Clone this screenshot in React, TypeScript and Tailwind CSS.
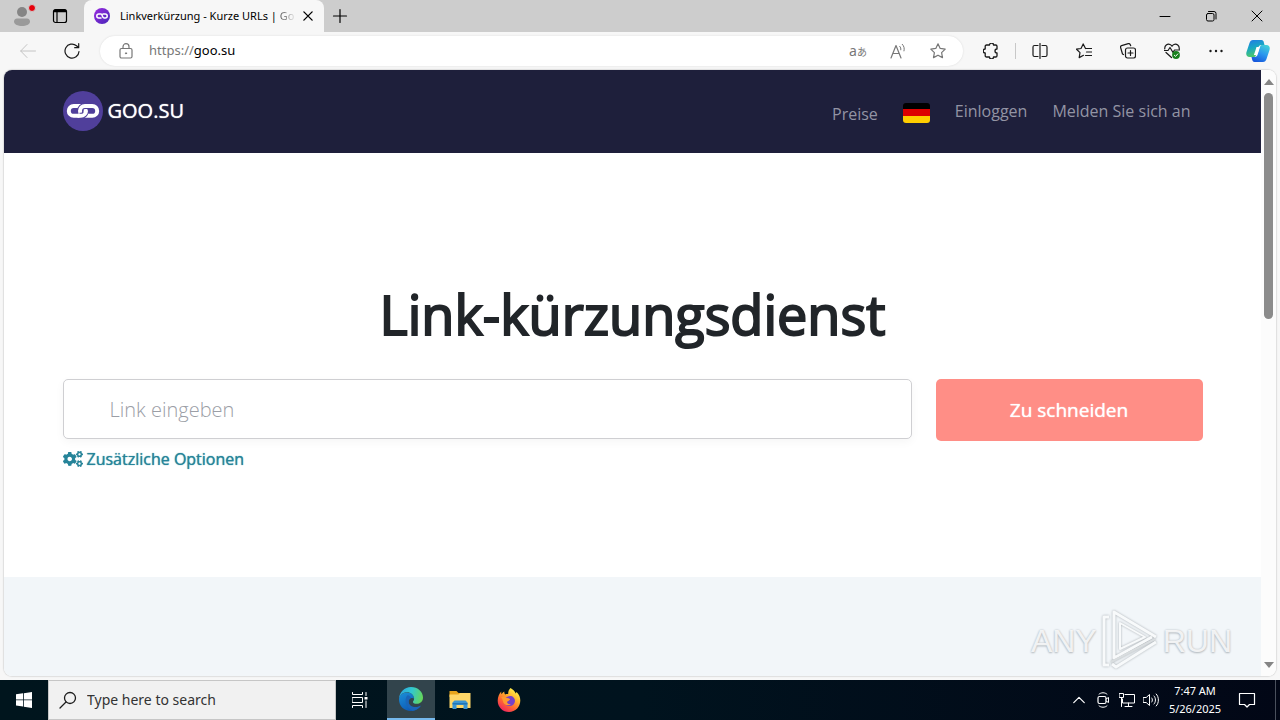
import type { ReactNode } from "react";
import { FaCogs } from "react-icons/fa";

type IconProps = { children: ReactNode; className?: string; box?: string };

function Icon({ children, className = "size-4", box = "0 0 16 16" }: IconProps) {
  return (
    <svg
      viewBox={box}
      className={`shrink-0 ${className}`}
      fill="none"
      stroke="currentColor"
      strokeWidth="1"
      strokeLinecap="round"
      strokeLinejoin="round"
      aria-hidden="true"
    >
      {children}
    </svg>
  );
}

function ChainLogo({ className, tone }: { className: string; tone: string }) {
  return (
    <svg viewBox="0 0 40 40" className={`shrink-0 ${className}`} fill="none" aria-hidden="true">
      <circle cx="20" cy="20" r="20" fill={tone} />
      <rect x="5.800" y="15" width="17" height="9.800" rx="4.900" stroke="#fff" strokeWidth="4" />
      <path d="M24 24.800h5.300a4.900 4.900 0 0 0 0-9.800h-7.400c-2.700 0-4.900 2.200-4.900 4.900 0 1 .3 2 .9 2.800" stroke={tone} strokeWidth="6" />
      <path d="M21.900 24.800h7.400a4.900 4.900 0 0 0 0-9.800h-7.400c-2.700 0-4.900 2.200-4.900 4.900s2.200 4.900 4.900 4.900Z" stroke="#fff" strokeWidth="4" />
      <path d="M16.500 24.800h1.400a4.900 4.900 0 0 0 4.500-3" stroke={tone} strokeWidth="6" />
      <path d="M14.500 24.800h3.400a4.900 4.900 0 0 0 4.900-4.900v-.5" stroke="#fff" strokeWidth="4" />
    </svg>
  );
}

function EdgeLogo() {
  return (
    <svg viewBox="0 0 24 24" className="size-6" aria-hidden="true">
      <defs>
        <linearGradient id="edgeTop" x1="0" y1="0.3" x2="1" y2="0.5">
          <stop offset="0" stopColor="#2aa5e0" />
          <stop offset="0.5" stopColor="#32c8d0" />
          <stop offset="1" stopColor="#65d65a" />
        </linearGradient>
        <linearGradient id="edgeLow" x1="0" y1="0" x2="0.6" y2="1">
          <stop offset="0" stopColor="#1b8fd8" />
          <stop offset="1" stopColor="#0c58b4" />
        </linearGradient>
      </defs>
      <path fill="url(#edgeLow)" d="M0 12.500C0 8 4 5.500 8 5.500c4.500 0 7 3 7 6-2-1.500-6 0-5.500 4 .6 4 6 6.500 12.300 3.200C19.500 22 16 24 12 24 5 24 0 19 0 12.500Z" />
      <path fill="#1a65b8" d="M8.500 8.200C5 12 6 20 13.500 23.800 18 23.400 20.500 21 22 18.600c-6 3.200-11.500.8-12.300-3.200-.4-2.600 1.300-4 2.300-4.600C11.500 9.500 10.300 8.400 8.500 8.200Z" />
      <path fill="url(#edgeTop)" d="M0 12C.3 5 5.500 0 12 0c7 0 12 5 12 10.500 0 4-3 6.300-6.300 6.300-2.600 0-3.700-1-3.700-1.900 0-.7 1.100-1.200 1.100-3.300C15 8 11.700 5.300 8 5.300 4 5.300.6 8 0 12Z" />
    </svg>
  );
}

function FolderLogo() {
  return (
    <svg viewBox="0 0 24 24" className="size-6" aria-hidden="true">
      <path fill="#e8a51c" d="M1.500 3h7l2 2H22v4H1.500Z" />
      <path fill="#ffd768" d="M1.500 6.500h9L12 5h10.500v15h-21Z" />
      <path fill="#3c96d3" d="M4.500 21v-6.500l2-2h11l2 2V21h-4v-4h-7v4Z" />
      <path fill="#2376b4" d="M4.500 15h15v1.500h-15Z" />
    </svg>
  );
}

function FirefoxLogo() {
  return (
    <svg viewBox="0 0 24 24" className="size-6" aria-hidden="true">
      <defs>
        <linearGradient id="fire" x1="0.8" y1="0.1" x2="0.25" y2="0.95">
          <stop offset="0" stopColor="#fff04a" />
          <stop offset="0.35" stopColor="#ffb02c" />
          <stop offset="0.65" stopColor="#ff6a30" />
          <stop offset="1" stopColor="#f0285c" />
        </linearGradient>
      </defs>
      <path fill="url(#fire)" d="M13.500 0c2.600 1.500 4.600 3.600 5.200 5.500l.9-1.600c2.600 2.600 3.700 5.500 3.700 8.600C23.300 19 18.300 24 12 24S.7 19 .7 12.700c0-3.500 1.500-7.200 3.600-9.100-.2 1 0 1.900.4 2.600.7-1.300 1.700-2 2.600-2.600-.1 1 .2 2.200.9 2.800 1-.5 2-.6 3-.3C11 4 11.800 1.500 13.500 0Z" />
      <path fill="#7541c8" d="M8 9.500c2-.2 3.200-1.500 5-1.500 2.800 0 5 2.100 5 5a5.300 5.300 0 0 1-5.500 5c-3.300 0-5.700-2.700-5.300-5.400 1 .9 2.700.8 3.800.4l2-1.300c-.4-1.200-2.900-1.600-5-2.200Z" />
      <path fill="#ff9a2f" d="M4.200 9.200c2-1.200 3.800-.6 5.200.5 1.300 1 3.400.8 3.700 1.500-.3 1-2 1.100-2.700 2.300-1 1.600 1 3.300 3.700 2.500-2.400 2.500-7.600 1-8.200-3.100-.2-1.400-.8-2.500-1.700-3.700Z" />
    </svg>
  );
}

function CopilotLogo() {
  return (
    <svg viewBox="0 0 24 24" className="size-6" aria-hidden="true">
      <defs>
        <linearGradient id="copA" x1="0" y1="0" x2="0.3" y2="1">
          <stop offset="0" stopColor="#2477e8" />
          <stop offset="0.5" stopColor="#18a7c4" />
          <stop offset="1" stopColor="#4cc86a" />
        </linearGradient>
        <linearGradient id="copB" x1="0.8" y1="0" x2="0.3" y2="1">
          <stop offset="0" stopColor="#42d0d8" />
          <stop offset="0.5" stopColor="#2a97ee" />
          <stop offset="1" stopColor="#1657dc" />
        </linearGradient>
      </defs>
      <path fill="url(#copA)" d="M7 1h8.500c1.500 0 2 1 2.300 2.200L18.500 6h-3c-2 0-2.700 1-3.200 2.700L10 16c-.5 1.500-1 2-2.500 2H3.500C.7 18-.3 15.600.5 13L3.500 4C4.200 2 5.200 1 7 1Z" />
      <path fill="url(#copB)" d="M17 23H8.500c-1.500 0-2-1-2.300-2.200L5.500 18h3c2 0 2.700-1 3.200-2.700L14 8c.5-1.500 1-2 2.500-2h4c2.800 0 3.800 2.400 3 5l-3 9c-.7 2-1.700 3-3.500 3Z" />
      <path fill="#fff" d="M10.500 8h3.200l-2 6.500c-.5 1.400-1 1.500-1.700 1.500H7.900l2-6Z" />
    </svg>
  );
}

const iconButton = "flex h-8 w-8 shrink-0 items-center justify-center";

function TabStrip() {
  return (
    <header className="flex h-8 shrink-0 items-stretch bg-[#cdcdcd] text-black">
      <button aria-label="Profile" className="relative ml-2 flex w-7 items-center justify-center">
        <svg viewBox="0 0 20 20" className="size-5" aria-hidden="true">
          <circle cx="10" cy="6" r="5" fill="#858585" />
          <path d="M2 15.500c0-2 1.500-3 3-3h10c1.500 0 3 1 3 3 0 3-4 4.500-8 4.500s-8-1.500-8-4.500Z" fill="#9a9a9a" />
        </svg>
        <span className="absolute top-1 right-0 size-2 rounded-full border border-[#cdcdcd] bg-red-600" />
      </button>
      <button aria-label="Tab actions" className="ml-2 flex w-8 items-center justify-center">
        <Icon className="size-4">
          <rect x="1.500" y="1.500" width="13" height="13" rx="2" strokeWidth="1.200" />
          <path d="M2 3h12" strokeWidth="2.500" strokeLinecap="butt" />
          <path d="M5 3v11" strokeWidth="1.200" />
        </Icon>
      </button>
      <div className="ml-2 flex w-60 items-center rounded-t-lg bg-[#f7f7f7] pr-1.5 pl-1.5">
        <svg viewBox="0 0 16 16" className="ml-1 size-4 shrink-0" fill="none" aria-hidden="true">
          <defs>
            <linearGradient id="fav" x1="0" y1="0" x2="1" y2="1">
              <stop offset="0" stopColor="#9a2be0" />
              <stop offset="1" stopColor="#4726b8" />
            </linearGradient>
          </defs>
          <circle cx="8" cy="8" r="8" fill="url(#fav)" />
          <path d="M7 10H4.800a2 2 0 0 1 0-4H7c1.500 0 1 4 3 4h1.200a2 2 0 0 0 0-4H9" stroke="#fff" strokeWidth="1.500" strokeLinecap="round" />
        </svg>
        <span className="ml-2.5 flex-1 whitespace-nowrap font-['Noto_Sans',sans-serif] text-[11px]">
          Linkverkürzung - Kurze URLs | <span className="bg-linear-to-r from-[#555] to-[#ddd] bg-clip-text text-transparent">Go</span>
        </span>
        <button aria-label="Close tab" className="flex size-5 shrink-0 items-center justify-center">
          <Icon className="size-3">
            <path d="M2.500 2.500l11 11M13.500 2.500l-11 11" strokeWidth="1.800" />
          </Icon>
        </button>
      </div>
      <button aria-label="New tab" className="flex w-8 items-center justify-center">
        <Icon>
          <path d="M8 1.500v13M1.500 8h13" strokeWidth="1.200" />
        </Icon>
      </button>
      <div className="ml-auto flex">
        <button aria-label="Minimize" className="flex w-[46px] items-center justify-center">
          <Icon className="size-3" box="0 0 12 12">
            <path d="M1 6.500h10" />
          </Icon>
        </button>
        <button aria-label="Restore" className="flex w-[46px] items-center justify-center">
          <Icon className="size-3" box="0 0 12 12">
            <rect x="1.500" y="3.500" width="7.500" height="7.500" rx="1.500" />
            <path d="M3.500 1.500H9a2 2 0 0 1 2 2V9" />
          </Icon>
        </button>
        <button aria-label="Close" className="flex w-[46px] items-center justify-center">
          <Icon className="size-3" box="0 0 12 12">
            <path d="M1 1l10 10M11 1L1 11" />
          </Icon>
        </button>
      </div>
    </header>
  );
}

function Toolbar() {
  return (
    <div className="flex h-[38px] shrink-0 items-center bg-[#f7f7f7] pr-2.5 pl-3 text-[#1a1a1a]">
      <button aria-label="Back" className={`${iconButton} text-[#c4c4c4]`}>
        <Icon className="size-4">
          <path d="M15.500 8H.7M7 1.500L.7 8 7 14.500" />
        </Icon>
      </button>
      <button aria-label="Refresh" className={`${iconButton} ml-3`}>
        <Icon className="size-4">
          <path d="M15 8.500A7 7 0 1 1 12.500 2.700L14.500 4.500M14.700.7v4h-4" strokeWidth="1.200" />
        </Icon>
      </button>
      <div className="ml-3 flex h-[30px] flex-1 items-center rounded-full bg-white pr-[9px] pl-[18px] text-[#777] shadow-[0_0_2px_#d8d8d8]">
        <Icon className="size-4">
          <rect x="2" y="5.500" width="12" height="9.500" rx="1.500" strokeWidth="1.200" />
          <path d="M5 5.500V3.700a3 3 0 0 1 6 0v1.800" strokeWidth="1.200" />
          <circle cx="8" cy="10.300" r="0.600" fill="currentColor" />
        </Icon>
        <label htmlFor="address" className="ml-[15px] shrink-0 font-['Noto_Sans',sans-serif] text-[13px] text-[#777]">
          https://
        </label>
        <input id="address" defaultValue="goo.su" className="w-20 min-w-0 flex-1 bg-transparent font-['Noto_Sans',sans-serif] text-[13px] text-black outline-none" />
        <div className="flex items-center gap-2">
          <button aria-label="Translate" className="w-8 text-center font-['Noto_Sans','Noto_Sans_CJK_JP',sans-serif] text-sm leading-4 whitespace-nowrap">
            a<span className="text-[10px]">あ</span>
          </button>
          <button aria-label="Read aloud" className={iconButton}>
            <Icon className="size-4">
              <path d="M1 15L6 2.500 11 15M2.800 10.500h6.400" strokeWidth="1.200" />
              <path d="M9.700 3.300c1 1 1.300 2.200 1.100 3.500M12.300 1.300c1.800 1.800 2.300 4.200 1.700 6.600" />
            </Icon>
          </button>
          <button aria-label="Add to favourites" className={iconButton}>
            <Icon className="size-4">
              <path d="M8 .8l2.200 4.600 5 .7-3.600 3.500.9 5L8 12.200l-4.500 2.400.9-5L.8 6.100l5-.7Z" strokeWidth="1.200" />
            </Icon>
          </button>
        </div>
      </div>
      <div className="ml-3 flex shrink-0 items-center">
        <button aria-label="Extensions" className={iconButton}>
          <Icon className="size-4">
            <path d="M3.500 2h3a2 2 0 0 1 4 0h2.200c.8 0 1.300.5 1.300 1.300V6a2 2 0 1 0 0 4v2.700c0 .8-.5 1.300-1.300 1.300h-2.200a2 2 0 0 1-4 0h-3c-.8 0-1.300-.5-1.300-1.300V10a2 2 0 0 1 0-4V3.300C2.200 2.500 2.700 2 3.500 2Z" strokeWidth="1.300" />
          </Icon>
        </button>
        <span className="mx-2 h-4 w-px bg-[#c8c8c8]" />
        <div className="flex items-center gap-3">
          <button aria-label="Split screen" className={iconButton}>
            <Icon className="size-4">
              <path d="M6 2.500H2.500c-1 0-1.500.5-1.500 1.500v8c0 1 .5 1.500 1.500 1.500H6M10 2.500h3.500c1 0 1.500.5 1.500 1.500v8c0 1-.5 1.500-1.500 1.500H10M8 .5v15" strokeWidth="1.200" />
            </Icon>
          </button>
          <button aria-label="Favourites" className={iconButton}>
            <Icon className="size-4">
              <path d="M9.500 5.500L7.200.9 5 5.500l-4.500.7L4 9.600l-.8 5 4.300-2.300M9.500 5.500h6M10.500 9h5M9.500 12.500h6" strokeWidth="1.200" />
            </Icon>
          </button>
          <button aria-label="Collections" className={iconButton}>
            <Icon className="size-4">
              <rect x="5.500" y="5" width="10" height="10" rx="2" strokeWidth="1.200" />
              <path d="M10.500 7.500v5M8 10h5M3.500 11.500l-1-.5L.6 4.500c-.3-1 .2-1.600 1-1.900L8.300.7c1-.3 1.700.2 2 1l.4 1" strokeWidth="1.200" />
            </Icon>
          </button>
          <button aria-label="Browser essentials" className={iconButton}>
            <Icon className="size-4">
              <path d="M.8 6C.3 2.500 3.500.5 6 1.500c1 .4 1.500 1 2 1.800.5-.8 1-1.400 2-1.800 2.500-1 5.700 1 5.200 4.500M2 9.500l5.500 5M.5 7.500H4L6 4.500l3 5 1.500-2.500h5" strokeWidth="1.200" />
              <circle cx="12" cy="12" r="3.900" fill="#18801d" stroke="none" />
              <path d="M10.300 12.200l1.200 1.200 2.300-2.500" stroke="#fff" />
            </Icon>
          </button>
          <button aria-label="Settings and more" className={iconButton}>
            <Icon className="size-4">
              <g fill="currentColor" stroke="none">
                <circle cx="2.500" cy="8" r="1.200" />
                <circle cx="8" cy="8" r="1.200" />
                <circle cx="13.500" cy="8" r="1.200" />
              </g>
            </Icon>
          </button>
        </div>
        <button aria-label="Copilot" className="ml-3.5 flex items-center">
          <CopilotLogo />
        </button>
      </div>
    </div>
  );
}

function SiteHeader() {
  return (
    <header className="flex h-[83px] shrink-0 justify-center bg-[#1e1f3b] pb-0.5">
      <div className="flex w-[1140px] max-w-full items-center justify-between">
        <a href="#home" className="flex items-center gap-[5px] text-xl leading-8 text-white [text-shadow:0_0_1px_currentColor]">
          <ChainLogo className="size-10" tone="#503f9b" />
          <span>GOO.SU</span>
        </a>
        <nav className="flex items-center gap-[25px] pr-3 text-base text-[#9394a4]">
          <a href="#preise" className="pt-1.5">Preise</a>
          <button aria-label="Deutsch" className="mt-1 flex h-5 w-[27px] flex-col overflow-hidden rounded-[3px]">
            <span className="w-full flex-1 bg-black" />
            <span className="w-full flex-1 bg-[#dd0000]" />
            <span className="w-full flex-1 bg-[#ffce00]" />
          </button>
          <a href="#login">Einloggen</a>
          <a href="#signup">Melden Sie sich an</a>
        </nav>
      </div>
    </header>
  );
}

function Watermark() {
  return (
    <div className="absolute right-11 bottom-1 flex items-center gap-1 font-['Liberation_Sans_Narrow','Liberation_Sans',sans-serif] text-[32px] leading-none text-white/80 [text-shadow:0_0_2px_#b5bbc0,0_1px_2px_#b5bbc0]">
      <span>ANY</span>
      <svg viewBox="0 0 58 62" className="h-[62px] w-[58px] drop-shadow-[0_0_1px_#a5abb0]" fill="none" stroke="#f8fafb" strokeWidth="3" strokeLinejoin="round" aria-hidden="true">
        <path d="M8 7H3v48h5" />
        <path d="M55 27L13 2v46L51 27" />
        <path d="M19 13v26l25-12Z" strokeWidth="2" />
        <path d="M55 32L15 57l-4-3" />
        <path d="M10 52L54 29" stroke="#d9dddf" strokeWidth="2" />
      </svg>
      <span>RUN</span>
    </div>
  );
}

function Page() {
  return (
    <div className="min-h-0 flex-1 bg-[#f7f7f7] px-1 pb-1">
      <div className="relative flex h-full overflow-hidden rounded-lg bg-white shadow-[0_0_1px_1px_#dedede]">
        <main className="flex min-w-0 flex-1 flex-col font-['Open_Sans',sans-serif]">
          <SiteHeader />
          <section className="flex h-[424px] shrink-0 flex-col items-center pt-[126px]">
            <h1 className="text-[54px] leading-[70px] font-normal text-[#212529] [-webkit-text-stroke:2px_#212529]">
              Link-kürzungsdienst
            </h1>
            <form className="mt-[30px] w-[1140px] max-w-full" onSubmit={(e) => e.preventDefault()}>
              <div className="flex gap-6">
                <input
                  aria-label="Link eingeben"
                  placeholder="Link eingeben"
                  className="h-[60px] min-w-0 flex-1 rounded-[5px] border border-[#cfcfd2] bg-white px-[46px] text-xl font-light text-[#212529] shadow-[0_3px_10px_rgba(0,0,0,0.04)] placeholder:text-[#9b9ea6]"
                />
                <button className="h-[62px] w-[267px] rounded-[5px] bg-[#ff8e86] text-[19px] font-medium text-white [text-shadow:0_0_1px_currentColor]">
                  Zu schneiden
                </button>
              </div>
              <a href="#options" className="mt-1.5 flex items-center gap-1 text-base font-medium text-[#268499] [text-shadow:0_0_1px_currentColor]">
                <FaCogs className="size-5" />
                Zusätzliche Optionen
              </a>
            </form>
          </section>
          <section className="flex-1 bg-[#f2f6f9]" />
        </main>
        <div className="flex w-[15px] shrink-0 flex-col items-center bg-[#fcfcfc] pt-[7px] pb-2 text-[#858585]">
          <svg viewBox="0 0 10 6" className="mt-0.5 h-1.5 w-2.5" aria-hidden="true">
            <path d="M5 0l5 6H0Z" fill="currentColor" />
          </svg>
          <span className="mt-2 h-[226px] w-[9px] rounded-full bg-[#8b8b8b]" />
          <svg viewBox="0 0 10 6" className="mt-auto h-1.5 w-2.5" aria-hidden="true">
            <path d="M5 6l5-6H0Z" fill="currentColor" />
          </svg>
        </div>
        <Watermark />
      </div>
    </div>
  );
}

const task = "flex h-10 w-12 items-center justify-center";

function Taskbar() {
  return (
    <footer className="flex h-10 shrink-0 items-center bg-linear-to-r from-[#00151d] via-[#00131e] via-50% to-[#020716] text-white">
      <button aria-label="Start" className={task}>
        <svg viewBox="0 0 16 16" className="size-4" fill="currentColor" aria-hidden="true">
          <path d="M0 2.300l7-1v6.200H0ZM7.800 1.200L16 0v7.500H7.800ZM0 8.300h7v6.300l-7-1ZM7.800 8.300H16V16l-8.200-1.200Z" />
        </svg>
      </button>
      <label className="flex h-10 w-72 items-center gap-2.5 border border-[#c6c6c6] bg-[#f1f1f1] px-2.5 text-[#1d1d1d]">
        <Icon className="size-[18px]" box="0 0 18 18">
          <circle cx="11" cy="7" r="5.500" strokeWidth="1.300" />
          <path d="M7 11l-6 6" strokeWidth="1.300" />
        </Icon>
        <input
          aria-label="Search"
          placeholder="Type here to search"
          className="min-w-0 flex-1 bg-transparent font-['Noto_Sans',sans-serif] text-sm outline-none placeholder:text-[#333]"
        />
      </label>
      <button aria-label="Task view" className={task}>
        <Icon>
          <path d="M.5.5v2h10v-2M.5 15.500v-2h10v2M.5 5.500h10v5H.500ZM14 .5v3M14 9v6.500" />
          <path d="M12.500 5h3v2.500h-3Z" fill="currentColor" stroke="none" />
        </Icon>
      </button>
      <button aria-label="Edge" className={`${task} ml-[3px] border-b-2 border-[#76b9ed] bg-[#32444c]`}>
        <EdgeLogo />
      </button>
      <button aria-label="File Explorer" className={`${task} ml-px`}>
        <FolderLogo />
      </button>
      <button aria-label="Firefox" className={`${task} ml-px`}>
        <FirefoxLogo />
      </button>
      <div className="ml-auto flex items-center">
        <button aria-label="Show hidden icons" className="flex w-6 justify-center">
          <Icon className="size-3.5">
            <path d="M2 11l6-6 6 6" strokeWidth="1.400" />
          </Icon>
        </button>
        <button aria-label="Camera" className="flex w-6 justify-center">
          <Icon className="size-4">
            <path d="M4 2.200C6 .2 10 .2 12 2.200M4 13.800c2 2 6 2 8 0M11 7l2.500-1.500v5L11 9" />
            <rect x="3" y="4.500" width="8" height="7" rx="1.500" strokeWidth="1.200" />
          </Icon>
        </button>
        <button aria-label="Network" className="flex w-6 justify-center">
          <Icon className="size-4">
            <path d="M6 2.500h9.500v8.500H3.500V7M9.500 11v3.500M6 14.500h7M.5 1.500h4v4h-4ZM2.500 5.500v9" />
          </Icon>
        </button>
        <button aria-label="Volume" className="flex w-6 justify-center">
          <Icon className="size-4">
            <path d="M.5 5.500h2.700l3.300-3v11l-3.300-3H.500ZM8.800 6c.8 1 .8 3 0 4M11 4c2 2 2 6 0 8M13.200 2c3 3 3 9 0 12" />
          </Icon>
        </button>
        <div className="w-16 text-center font-['Noto_Sans',sans-serif] text-[11px] leading-[18px]">
          <div>7:47 AM</div>
          <div>5/26/2025</div>
        </div>
        <button aria-label="Notifications" className="ml-2 flex w-6 justify-center">
          <Icon className="size-[18px]" box="0 0 18 18">
            <path d="M1.500 2.500h15v11h-5L9 16l-2.500-2.500h-5Z" strokeWidth="1.200" />
          </Icon>
        </button>
        <span className="ml-4 h-10 w-[5px] border-l border-[#4a505c]" />
      </div>
    </footer>
  );
}

export default function App() {
  return (
    <div className="flex h-screen flex-col overflow-hidden bg-[#f7f7f7]">
      <TabStrip />
      <Toolbar />
      <Page />
      <Taskbar />
    </div>
  );
}
